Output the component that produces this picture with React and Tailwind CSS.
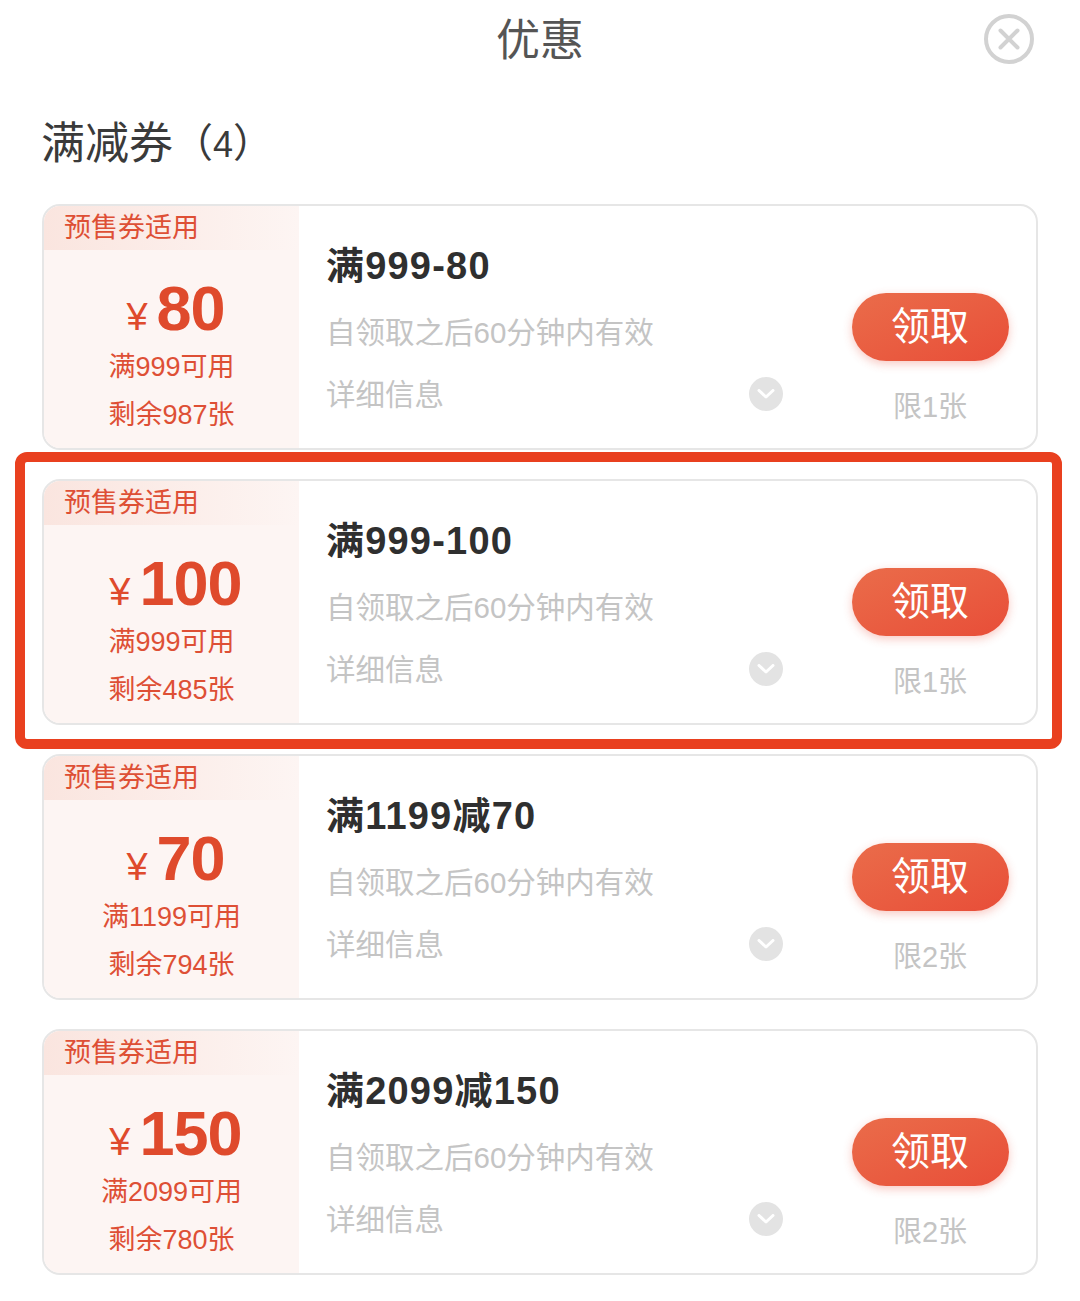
import React from "react";

const coupons = [
    { amount: "80", title: "满999-80", min: "满999可用", left: "剩余987张", limit: "限1张" },
    { amount: "100", title: "满999-100", min: "满999可用", left: "剩余485张", limit: "限1张", marked: true },
    { amount: "70", title: "满1199减70", min: "满1199可用", left: "剩余794张", limit: "限2张" },
    { amount: "150", title: "满2099减150", min: "满2099可用", left: "剩余780张", limit: "限2张" },
];

const font = { fontFamily: '"Liberation Sans", "Noto Sans CJK SC", sans-serif' };

const Coupon = ({ c }) => {
    return (
        <div className="relative">
            {/* Red highlight frame */}
            {c.marked && (
                <div className="absolute -left-[27px] -right-[24px] -top-[27px] -bottom-[24px] z-10 rounded-[12px] border-[10px] border-[#e9401f] pointer-events-none" />
            )}
            <div className="flex h-[246px] overflow-hidden rounded-[18px] border-2 border-[#e6e6e6] bg-white">
                {/* Left amount panel */}
                <div className="flex w-[255px] shrink-0 flex-col bg-[#fdf5f3] text-[#de4f35]">
                    <div className="h-[44px] bg-gradient-to-r from-[#fae5df] to-[#fdf5f3] pl-[20px] text-[27px] leading-[44px]">
                        预售券适用
                    </div>
                    <div className="flex flex-1 flex-col items-center">
                        <div className="mt-[25px] flex h-[66px] translate-x-[4px] items-baseline justify-center font-bold text-[#df4a2c]">
                            <span className="mr-[9px] text-[38px] font-normal leading-none">¥</span>
                            <span className="text-[63px] leading-[66px] tracking-[-1px]">{c.amount}</span>
                        </div>
                        <div className="mt-[8px] text-[27px] leading-[36px]">{c.min}</div>
                        <div className="mt-[12px] text-[27px] leading-[36px]">{c.left}</div>
                    </div>
                </div>

                {/* Middle text */}
                <div className="flex min-w-0 flex-1 flex-col pl-[27px]">
                    <div className="mt-[36px] text-[38px] font-bold leading-[48px] tracking-[1.2px] text-[#2f2f2f]">{c.title}</div>
                    <div className="mt-[23px] text-[29.5px] leading-[40px] text-[#c4c4c4]">自领取之后60分钟内有效</div>
                    <div className="mt-[22px] flex items-center text-[29.5px] leading-[40px] text-[#c4c4c4]">
                        <span>详细信息</span>
                        <div className="ml-[305px] flex h-[34px] w-[34px] -translate-y-[1px] items-center justify-center rounded-full bg-[#e3e3e3]">
                            <svg width="18" height="10" viewBox="0 0 18 10" fill="none">
                                <path d="M2 1.5 L9 8 L16 1.5" stroke="#fff" strokeWidth="3" strokeLinecap="round" strokeLinejoin="round" />
                            </svg>
                        </div>
                    </div>
                </div>

                {/* Right action */}
                <div className="flex w-[186px] shrink-0 flex-col items-center">
                    <div className="mt-[87px] flex h-[68px] w-[157px] -translate-x-[13px] items-center justify-center rounded-full bg-gradient-to-br from-[#ea6c4a] to-[#e84d38] text-[39px] text-white shadow-[0_3px_10px_rgba(233,77,56,0.3)]">
                        领取
                    </div>
                    <div className="mt-[26px] -translate-x-[13px] text-[29px] leading-[40px] text-[#c4c4c4]">{c.limit}</div>
                </div>
            </div>
        </div>
    );
};

export default function App() {
    return (
        <div className="h-[1301px] w-[1080px] overflow-hidden bg-white" style={font}>
            {/* Header */}
            <div className="relative h-[79px] text-center text-[44px] leading-[81px] text-[#555]">
                优惠
                <svg className="absolute right-[46px] top-[14px]" width="50" height="50" viewBox="0 0 50 50" fill="none">
                    <circle cx="25" cy="25" r="23" stroke="#d2d2d2" strokeWidth="4" />
                    <path d="M16.5 16.5 L33.5 33.5 M33.5 16.5 L16.5 33.5" stroke="#d2d2d2" strokeWidth="4" strokeLinecap="round" />
                </svg>
            </div>

            <div className="mt-[35px] flex h-[60px] items-baseline pl-[41px] text-[44px] leading-[60px] text-[#3a3a3a]">
                满减券
                <span className="-translate-y-[2px] text-[40px]">（</span>
                <span className="-translate-y-[2px] text-[36px]">4</span>
                <span className="-translate-y-[2px] text-[40px]">）</span>
            </div>

            <div className="mt-[30px] flex flex-col gap-[29px] px-[42px]">
                {coupons.map((c) => (
                    <Coupon key={c.title} c={c} />
                ))}
            </div>
        </div>
    );
}
